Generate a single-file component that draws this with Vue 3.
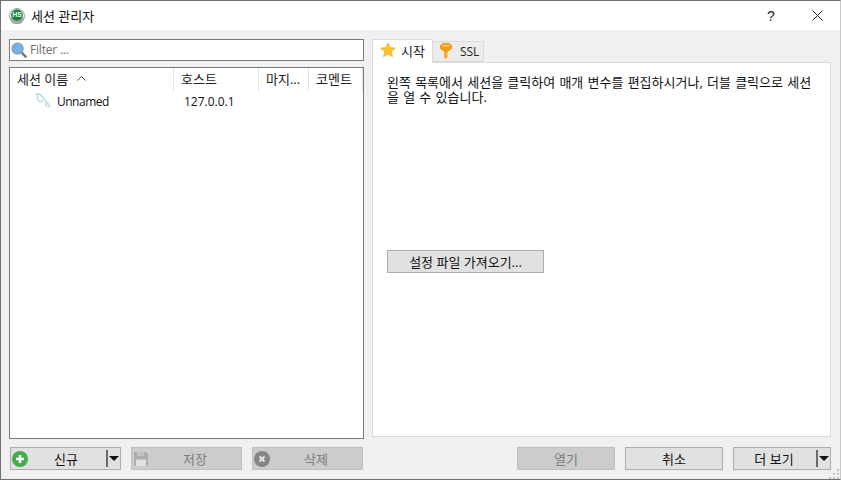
<script setup>
const columns = [
  { label: '세션 이름', width: 164, sort: true },
  { label: '호스트', width: 85 },
  { label: '마지...', width: 50 },
  { label: '코멘트', width: 54 }
]
</script>

<template>
  <div class="window">
    <header class="titlebar">
      <svg class="app-icon" viewBox="0 0 16 16">
        <circle cx="8" cy="8" r="7.6" fill="#ececec" stroke="#9a9a9a" stroke-width=".8" />
        <path d="M1 9.500a7 7 0 0 0 14 0z" fill="#a8a8a8" />
        <circle cx="8" cy="7" r="5.800" fill="#17803a" />
        <text x="8" y="9.400" text-anchor="middle" class="app-icon-text">HS</text>
      </svg>
      <span class="title">세션 관리자</span>
      <span class="help">?</span>
      <svg class="close" viewBox="0 0 11 11">
        <path d="M.5.5l10 10M10.500.5l-10 10" stroke="#222" stroke-width="1" fill="none" />
      </svg>
    </header>

    <main class="body">
      <div class="columns">
        <section class="left">
          <div class="filter">
            <svg class="search" viewBox="0 0 18 18">
              <path d="M10.500 10.500l5 5" stroke="#7d7468" stroke-width="2.600" stroke-linecap="round" />
              <circle cx="7" cy="7" r="5.800" fill="#6db4f0" stroke="#8b9bad" stroke-width="1.400" />
            </svg>
            <span class="filter-text">Filter ...</span>
          </div>
          <div class="tree">
            <div class="tree-head">
              <div v-for="c in columns" :key="c.label" class="th" :style="{ width: c.width + 'px' }">
                <span>{{ c.label }}</span>
                <svg v-if="c.sort" class="sort" viewBox="0 0 9 5">
                  <path d="M.5 4.500l4-4 4 4" fill="none" stroke="#555" stroke-width="1" />
                </svg>
              </div>
            </div>
            <div class="tree-row">
              <div class="cell-name">
                <svg class="dolphin" viewBox="0 0 16 16">
                  <path d="M1 1c3-.5 5 .5 7 3.500 1.500 2.500 3 5 6 7M14 11.500l.5 3.500M1.500 1c0 2 1 3.500 1.500 5.500.5 1 1 1.500 1.500 2M4.500 8.500c1.500.5 2.500 0 3-1.500M10 10.500c1 1 1.500 2.500 2.500 3" fill="none" stroke="#a5cfdd" stroke-width="1.100" />
                </svg>
                <span class="unnamed">Unnamed</span>
              </div>
              <div class="cell-host">127.0.0.1</div>
            </div>
          </div>
        </section>

        <section class="right">
          <div class="tabs">
            <div class="tab active">
              <svg class="star" viewBox="0 0 16 16">
                <path d="M8 .8l2.200 4.700 5.100.6-3.800 3.500 1 5.100L8 12.200l-4.500 2.500 1-5.100L.7 6.100l5.100-.6z" fill="#fdc22c" stroke="#f0a81a" stroke-width=".6" />
              </svg>
              <span>시작</span>
            </div>
            <div class="tab inactive">
              <svg class="key" viewBox="0 0 12 16">
                <path d="M3 0h6l3 2.500v3L9 8H7.800v5.500L6 16l-1.800-1.800V8H3L0 5.500v-3z" fill="#f59a14" />
                <path d="M3.500 2.800h5" stroke="#ffd98a" stroke-width="1.600" stroke-linecap="round" />
                <path d="M7.800 10.500h-1.500M7.800 12.800h-1.500" stroke="#fff" stroke-width=".8" />
              </svg>
              <span class="latin">SSL</span>
            </div>
          </div>
          <div class="pane">
            <p class="intro">왼쪽 목록에서 세션을 클릭하여 매개 변수를 편집하시거나, 더블 클릭으로 세션을 열 수 있습니다.</p>
            <button class="btn import">설정 파일 가져오기...</button>
          </div>
        </section>
      </div>

      <footer class="actions">
        <div class="group">
          <button class="btn wide has-icon">
            <svg class="btn-icon" viewBox="0 0 16 16">
              <circle cx="8" cy="8" r="8" fill="#43ad4a" />
              <path d="M8 4v8M4 8h8" stroke="#fff" stroke-width="2.600" />
            </svg>
            <span class="btn-label">신규</span>
            <span class="split"></span>
            <span class="caret"></span>
          </button>
          <button class="btn wide has-icon" disabled>
            <svg class="btn-icon" viewBox="0 0 16 16">
              <path d="M1 1h12l2 2v12H1z" fill="#adadad" />
              <path d="M4 1h7v4H4z" fill="#c4c4c4" />
              <path d="M3 8.500h10V15H3z" fill="#e2e2e2" />
            </svg>
            <span class="btn-label">저장</span>
          </button>
          <button class="btn wide has-icon" disabled>
            <svg class="btn-icon" viewBox="0 0 16 16">
              <circle cx="8" cy="8" r="8" fill="#858585" />
              <path d="M5.500 5.500l5 5M10.500 5.500l-5 5" stroke="#e6e6e6" stroke-width="2" />
            </svg>
            <span class="btn-label">삭제</span>
          </button>
        </div>
        <div class="group">
          <button class="btn narrow" disabled>열기</button>
          <button class="btn narrow">취소</button>
          <button class="btn narrow has-icon more">
            <span class="btn-label">더 보기</span>
            <span class="split"></span>
            <span class="caret"></span>
          </button>
        </div>
      </footer>
    </main>

    <svg class="grip" viewBox="0 0 11 11">
      <path d="M8 1h2v2H8zM4 5h2v2H4zM8 5h2v2H8zM0 9h2v2H0zM4 9h2v2H4zM8 9h2v2H8z" fill="#c4c4c4" />
    </svg>
  </div>
</template>

<style scoped>
.window {
  position: relative;
  width: 841px;
  height: 480px;
  box-sizing: border-box;
  display: flex;
  flex-direction: column;
  background: #f0f0f0;
  border-top: 1px solid #6f6f6f;
  border-left: 1px solid #6f6f6f;
  border-bottom: 1px solid #6f6f6f;
  border-right: 1px solid #c8c8c8;
  font-family: "Open Sans", "Noto Sans CJK KR", sans-serif;
  font-size: 13px;
  color: #111;
}
.titlebar {
  height: 29px;
  flex: none;
  display: flex;
  align-items: center;
  background: #fff;
  padding-left: 8px;
}
.app-icon { width: 16px; height: 16px; margin-right: 6px; }
.app-icon-text { font: 700 6.500px "Liberation Sans", sans-serif; fill: #fff; }
.title { flex: 1; color: #111; }
.help { width: 12px; margin-right: 35px; font-size: 14px; text-align: center; color: #222; font-family: "Liberation Sans", sans-serif; }
.close { width: 11px; height: 11px; margin-right: 17px; }
.body {
  flex: 1;
  min-height: 0;
  display: flex;
  flex-direction: column;
  padding: 9px 9px 9px 8px;
}
.columns { flex: 1; min-height: 0; display: flex; gap: 8px; }
.left { width: 355px; flex: none; display: flex; flex-direction: column; gap: 6px; }
.filter {
  height: 22px;
  box-sizing: border-box;
  display: flex;
  align-items: center;
  background: #fff;
  border: 1px solid #7a7a7a;
  flex: none;
}
.search { width: 17px; height: 17px; margin-left: 1px; margin-right: 2px; }
.filter-text { color: #6d6d6d; font-size: 12px; letter-spacing: -.2px; padding-bottom: 1px; }
.tree {
  flex: 1;
  min-height: 0;
  background: #fff;
  border: 1px solid #7a7a7a;
}
.tree-head { display: flex; height: 23px; }
.th {
  box-sizing: border-box;
  flex: none;
  display: flex;
  align-items: center;
  gap: 9px;
  padding: 0 0 3px 7px;
  border-right: 1px solid #e3e3e3;
  color: #222;
}
.sort { width: 9px; height: 5px; }
.tree-row { display: flex; height: 20px; align-items: center; font-size: 12px; }
.cell-name { width: 174px; flex: none; display: flex; align-items: center; padding-left: 25px; box-sizing: border-box; }
.unnamed { letter-spacing: -.5px; }
.dolphin { width: 16px; height: 16px; margin-right: 6px; }
.right { flex: 1; min-width: 0; display: flex; flex-direction: column; }
.tabs { display: flex; height: 23px; flex: none; align-items: flex-end; position: relative; z-index: 1; }
.tab {
  box-sizing: border-box;
  display: flex;
  align-items: center;
  background: #ececec;
  border: 1px solid #d9d9d9;
  color: #222;
}
.inactive {
  height: 21px;
  gap: 8px;
  padding: 0 4px 1px 7px;
  border-left: none;
}
.active {
  height: 24px;
  margin-bottom: -1px;
  gap: 5px;
  background: #fff;
  border-bottom: none;
  padding: 0 7px 3px 7px;
}
.latin { font-size: 12px; }
.star { width: 16px; height: 16px; }
.key { width: 12px; height: 16px; }
.pane {
  flex: 1;
  min-height: 0;
  box-sizing: border-box;
  background: #fff;
  border: 1px solid #d9d9d9;
  padding: 12px 14px 0 14px;
  margin-bottom: 2px;
}
.intro { margin: 0; line-height: 15px; width: 425px; word-spacing: .85px; }
.import { width: 157px; display: block; margin-top: 145px; }
.btn {
  box-sizing: border-box;
  height: 23px;
  padding: 0;
  background: #e1e1e1;
  border: 1px solid #adadad;
  font: inherit;
  color: #111;
  text-align: center;
}
.btn:disabled { background: #cccccc; border-color: #bfbfbf; color: #7d7d7d; }
.actions { flex: none; display: flex; justify-content: space-between; margin-top: 8px; }
.group { display: flex; gap: 10px; }
.wide { width: 111px; }
.group:first-child { margin-left: 1px; }
.narrow { width: 98px; }
.has-icon { display: flex; align-items: center; }
.btn-icon { width: 16px; height: 16px; margin-left: 1px; flex: none; }
.btn-label { flex: 1; text-align: center; }
.has-icon:not(:disabled) .btn-label { padding-right: 2px; }
.split { width: 2px; height: 17px; background: #6a6a6a; flex: none; margin-right: 1px; }
.caret {
  flex: none;
  width: 0;
  height: 0;
  margin-right: 1px;
  border-left: 5px solid transparent;
  border-right: 5px solid transparent;
  border-top: 5px solid #111;
}
.grip { position: absolute; right: 0; bottom: 0; width: 11px; height: 11px; }
</style>
